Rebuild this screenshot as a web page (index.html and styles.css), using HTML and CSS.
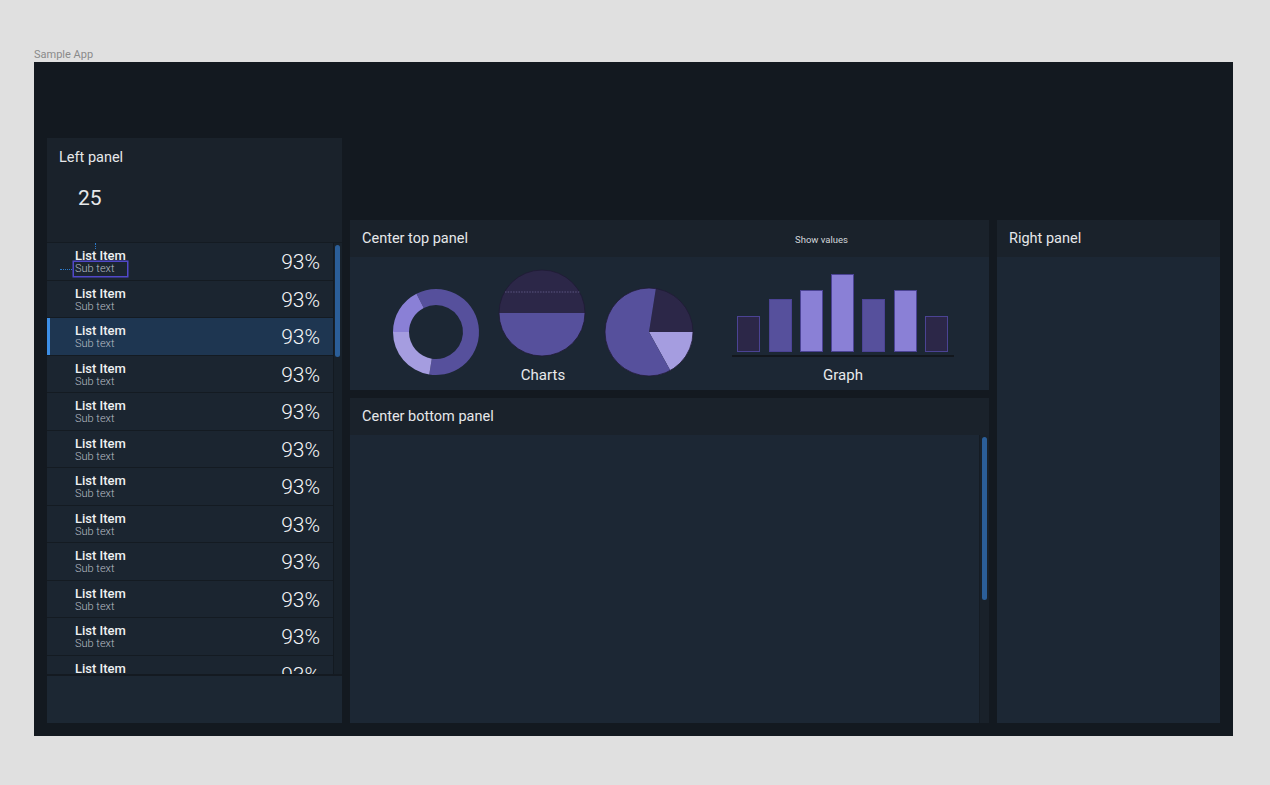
FILE: index.html
```html
<!DOCTYPE html>
<html lang="en">
<head>
<meta charset="utf-8">
<title>Sample App</title>
<link rel="stylesheet" href="styles.css">
</head>
<body>
<div class="app-label">Sample App</div>
<div class="frame">
  <section class="panel left-panel">
    <div class="left-head">
      <div class="left-title">Left panel</div>
      <div class="count">25</div>
    </div>
    <div class="list-wrap">
      <ul class="list">
        <li class="row"><div class="txt"><span class="t">List Item</span><span class="s sel">Sub text</span></div><span class="pct">93%</span></li>
        <li class="row"><div class="txt"><span class="t">List Item</span><span class="s">Sub text</span></div><span class="pct">93%</span></li>
        <li class="row active"><div class="txt"><span class="t">List Item</span><span class="s">Sub text</span></div><span class="pct">93%</span></li>
        <li class="row"><div class="txt"><span class="t">List Item</span><span class="s">Sub text</span></div><span class="pct">93%</span></li>
        <li class="row"><div class="txt"><span class="t">List Item</span><span class="s">Sub text</span></div><span class="pct">93%</span></li>
        <li class="row"><div class="txt"><span class="t">List Item</span><span class="s">Sub text</span></div><span class="pct">93%</span></li>
        <li class="row"><div class="txt"><span class="t">List Item</span><span class="s">Sub text</span></div><span class="pct">93%</span></li>
        <li class="row"><div class="txt"><span class="t">List Item</span><span class="s">Sub text</span></div><span class="pct">93%</span></li>
        <li class="row"><div class="txt"><span class="t">List Item</span><span class="s">Sub text</span></div><span class="pct">93%</span></li>
        <li class="row"><div class="txt"><span class="t">List Item</span><span class="s">Sub text</span></div><span class="pct">93%</span></li>
        <li class="row"><div class="txt"><span class="t">List Item</span><span class="s">Sub text</span></div><span class="pct">93%</span></li>
        <li class="row"><div class="txt"><span class="t">List Item</span><span class="s">Sub text</span></div><span class="pct">93%</span></li>
      </ul>
      <div class="vscroll list-scroll"><div class="thumb list-thumb"></div></div>
    </div>
    <div class="left-foot"></div>
  </section>

  <div class="center">
    <section class="panel ctop">
      <header class="panel-head">
        <span class="head-title">Center top panel</span>
        <span class="show-values">Show values</span>
      </header>
      <div class="chart-body">
        <svg class="charts" width="639" height="133" viewBox="0 0 639 133" xmlns="http://www.w3.org/2000/svg">
          <!-- donut -->
          <path d="M66.48 36.69 A43 43 0 1 1 79.27 117.47 L81.78 101.67 A27 27 0 1 0 73.74 50.94 Z" fill="#56509c"/>
          <path d="M79.27 117.47 A43 43 0 0 1 43 75 L59 75 A27 27 0 0 0 81.78 101.67 Z" fill="#a59de0"/>
          <path d="M43 75 A43 43 0 0 1 66.48 36.69 L73.74 50.94 A27 27 0 0 0 59 75 Z" fill="#8a80d6"/>
          <!-- half pie -->
          <path d="M149 56 A43 43 0 0 1 235 56 Z" fill="#2c2748"/>
          <path d="M149 56 A43 43 0 0 0 235 56 Z" fill="#56509c"/>
          <circle cx="192" cy="56" r="43" fill="none" stroke="#1f1b35" stroke-width="0.8"/>
          <line x1="155" y1="35" x2="230" y2="35" stroke="#7c76a8" stroke-width="0.6" stroke-dasharray="1.5 1.2"/>
          <!-- pie -->
          <path d="M299 75 L305.88 31.54 A44 44 0 0 1 343 75 Z" fill="#2c2748"/>
          <path d="M299 75 L343 75 A44 44 0 0 1 320.33 113.48 Z" fill="#a59de0"/>
          <path d="M299 75 L320.33 113.48 A44 44 0 1 1 305.88 31.54 Z" fill="#56509c"/>
          <circle cx="299" cy="75" r="44" fill="none" stroke="#1f1b35" stroke-width="0.8"/>
          <text x="193" y="123" class="chart-label" text-anchor="middle">Charts</text>
          <!-- bars -->
          <rect x="387.5" y="59.5" width="22" height="35" fill="#2c2748" stroke="#4b4394"/>
          <rect x="419.5" y="42.5" width="22" height="52" fill="#56509c" stroke="#4b4394"/>
          <rect x="450.5" y="33.5" width="22" height="61" fill="#8a80d6" stroke="#4b4394"/>
          <rect x="481.5" y="17.5" width="22" height="77" fill="#8a80d6" stroke="#4b4394"/>
          <rect x="512.5" y="42.5" width="22" height="52" fill="#56509c" stroke="#4b4394"/>
          <rect x="544.5" y="33.5" width="22" height="61" fill="#8a80d6" stroke="#4b4394"/>
          <rect x="575.5" y="59.5" width="22" height="35" fill="#2c2748" stroke="#4b4394"/>
          <line x1="382" y1="99" x2="604" y2="99" stroke="#12171d" stroke-width="2"/>
          <text x="493" y="123" class="chart-label" text-anchor="middle">Graph</text>
        </svg>
      </div>
    </section>
    <section class="panel cbottom">
      <header class="panel-head"><span class="head-title">Center bottom panel</span></header>
      <div class="cb-body">
        <div class="cb-content"></div>
        <div class="vscroll cb-scroll"><div class="thumb cb-thumb"></div></div>
      </div>
    </section>
  </div>

  <section class="panel right-panel">
    <header class="panel-head"><span class="head-title">Right panel</span></header>
    <div class="right-body"></div>
  </section>
</div>
</body>
</html>
```

FILE: styles.css
```css
* { box-sizing: border-box; }

html, body {
  margin: 0;
  padding: 0;
  background: #e0e0e0;
  font-family: Roboto, "Liberation Sans", Arial, sans-serif;
}

.app-label {
  margin: 47px 0 0 34px;
  height: 15px;
  line-height: 15px;
  font-size: 11px;
  color: #8a8a8a;
}

.frame {
  margin-left: 34px;
  width: 1199px;
  height: 674px;
  background: #131920;
  padding: 76px 13px 13px 13px;
  display: flex;
  gap: 8px;
}

.panel {
  display: flex;
  flex-direction: column;
  overflow: hidden;
}

/* ---------- left panel ---------- */
.left-head {
  height: 105px;
  background: #1a222b;
  border-bottom: 1px solid #141b22;
  padding: 11px 0 0 12px;
  color: #e6e8ea;
}

.left-panel {
  width: 295px;
  background: #1c2733;
}

.left-title {
  font-size: 14.5px;
  line-height: 17px;
}

.count {
  margin: 19px 0 0 19px;
  font-size: 21px;
  line-height: 26px;
}

.list-wrap {
  height: 431px;
  display: flex;
  overflow: hidden;
}

.list {
  list-style: none;
  margin: 0;
  padding: 0;
  flex: 1;
}

.row {
  height: 37.5px;
  display: flex;
  align-items: center;
  justify-content: space-between;
  padding: 2px 13px 0 28px;
  background: #1b2530;
  border-bottom: 1px solid #141b22;
  position: relative;
}

.row.active {
  background: #1e3651;
}

.row.active::before {
  content: "";
  position: absolute;
  left: 0;
  top: 0;
  bottom: 0;
  width: 3px;
  background: #3d8fe6;
}

.txt {
  display: flex;
  flex-direction: column;
}

.t {
  font-size: 13px;
  line-height: 14px;
  font-weight: 500;
  color: #eef0f2;
}

.s {
  font-size: 11px;
  line-height: 12px;
  color: #b8bec5;
  font-weight: 300;
}

.sel {
  position: relative;
  box-shadow: 0 0 0 1px #1b2530, 0 0 0 2.5px #5148c9;
}

.sel::before {
  content: "";
  position: absolute;
  left: -15px;
  top: 6px;
  width: 12px;
  border-top: 1.5px dotted #2b7acb;
}

.sel::after {
  content: "";
  position: absolute;
  left: 20px;
  top: -20px;
  height: 6px;
  border-left: 1.5px dotted #2b7acb;
}

.pct {
  font-size: 21px;
  font-weight: 300;
  color: #f4f6f8;
}

.vscroll {
  background: #18212a;
  border-left: 1px solid #131a21;
}

.list-scroll {
  width: 9px;
  padding: 2px 0 0 1px;
}

.thumb {
  width: 5px;
  border-radius: 3px;
  background: #2b5e98;
}

.list-thumb {
  height: 112px;
}

.left-foot {
  flex: 1;
  border-top: 2px solid #141a21;
  background: #1c2733;
}

/* ---------- center ---------- */
.center {
  width: 639px;
  margin-top: 82px;
  display: flex;
  flex-direction: column;
  gap: 8px;
}

.panel-head {
  height: 37px;
  flex: none;
  background: #1a222b;
  display: flex;
  align-items: center;
  padding: 0 12px;
  color: #e6e8ea;
  font-size: 14.5px;
}

.show-values {
  margin-left: auto;
  margin-right: 129px;
  margin-top: 2px;
  font-size: 9.5px;
  color: #d2d6da;
}

.ctop {
  height: 170px;
  background: #1c2734;
}

.chart-body {
  flex: 1;
  background: #1c2734;
}

.charts {
  display: block;
}

.chart-label {
  font-family: Roboto, "Liberation Sans", Arial, sans-serif;
  font-size: 15px;
  fill: #e8eaec;
}

.cbottom {
  flex: 1;
  background: #1c2734;
}

.cb-body {
  flex: 1;
  display: flex;
}

.cb-content {
  flex: 1;
}

.cb-scroll {
  width: 10px;
  padding: 2px 0 0 2px;
  background: #19212a;
  border-left: 1px solid #151c24;
}

.cb-thumb {
  height: 163px;
}

/* ---------- right ---------- */
.right-panel {
  width: 223px;
  margin-top: 82px;
  background: #1c2734;
}

.right-body {
  flex: 1;
}
```
